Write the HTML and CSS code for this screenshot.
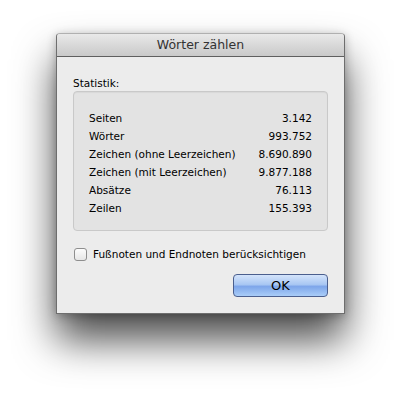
FILE: index.html
```html
<!DOCTYPE html>
<html lang="de">
<head>
  <meta charset="UTF-8">
  <title>Wörter zählen</title>
  <link rel="stylesheet" href="styles.css">
</head>
<body>
  <div class="window">
    <div class="titlebar">Wörter zählen</div>
    <div class="content">
      <div class="label">Statistik:</div>
      <div class="stats">
        <span>Seiten</span><span class="num">3.142</span>
        <span>Wörter</span><span class="num">993.752</span>
        <span>Zeichen (ohne Leerzeichen)</span><span class="num">8.690.890</span>
        <span>Zeichen (mit Leerzeichen)</span><span class="num">9.877.188</span>
        <span>Absätze</span><span class="num">76.113</span>
        <span>Zeilen</span><span class="num">155.393</span>
      </div>
      <label class="check"><span class="box"></span>Fußnoten und Endnoten berücksichtigen</label>
      <div class="buttons">
        <button class="ok">OK</button>
      </div>
    </div>
  </div>
</body>
</html>
```

FILE: styles.css
```css
html, body {
  height: 100%;
}

body {
  margin: 0;
  background: #fff;
  font-family: "DejaVu Sans", sans-serif;
  font-size: 10.5px;
  color: #000;
}

.window {
  width: 287px;
  margin: 33px 0 0 56px;
  background: #ececec;
  border: 1px solid #6e6e6e;
  border-top-color: #b0b0b0;
  border-radius: 4px 4px 0 0;
  box-shadow: 0 26px 40px rgba(0, 0, 0, 0.7), 0 2px 10px rgba(0, 0, 0, 0.25);
}

.titlebar {
  height: 22px;
  line-height: 22px;
  text-align: center;
  font-size: 12.5px;
  color: #333;
  background: linear-gradient(#e9e9e9, #c9c9c9);
  border-bottom: 1px solid #5f5f5f;
  border-radius: 3px 3px 0 0;
}

.content {
  padding: 19px 16px 16px 16px;
}

.label {
  line-height: 14px;
  margin-bottom: 1px;
}

.stats {
  display: grid;
  grid-template-columns: 1fr auto;
  row-gap: 4px;
  line-height: 14px;
  padding: 19px 15px 15px 15px;
  background: #e3e3e3;
  border: 1px solid #c9c9c9;
  border-radius: 4px;
  box-shadow: inset 0 1px 1px rgba(0, 0, 0, 0.05);
}

.num {
  text-align: right;
}

.check {
  display: flex;
  align-items: center;
  gap: 6px;
  height: 14px;
  margin-top: 16px;
  margin-left: 1px;
}

.box {
  width: 11px;
  height: 11px;
  border: 1px solid #8e8e8e;
  border-radius: 3px;
  background: linear-gradient(#fcfcfc, #e6e6e6);
}

.buttons {
  display: flex;
  justify-content: flex-end;
  margin-top: 13px;
}

.ok {
  width: 95px;
  height: 23px;
  font-family: "DejaVu Sans", sans-serif;
  font-size: 13px;
  color: #000;
  border: 1px solid #4b5f8e;
  border-radius: 4px;
  background: linear-gradient(#d4e4fb 0%, #a9c7f3 45%, #7ea6ea 55%, #a9cdf8 100%);
  padding: 0;
}
```
